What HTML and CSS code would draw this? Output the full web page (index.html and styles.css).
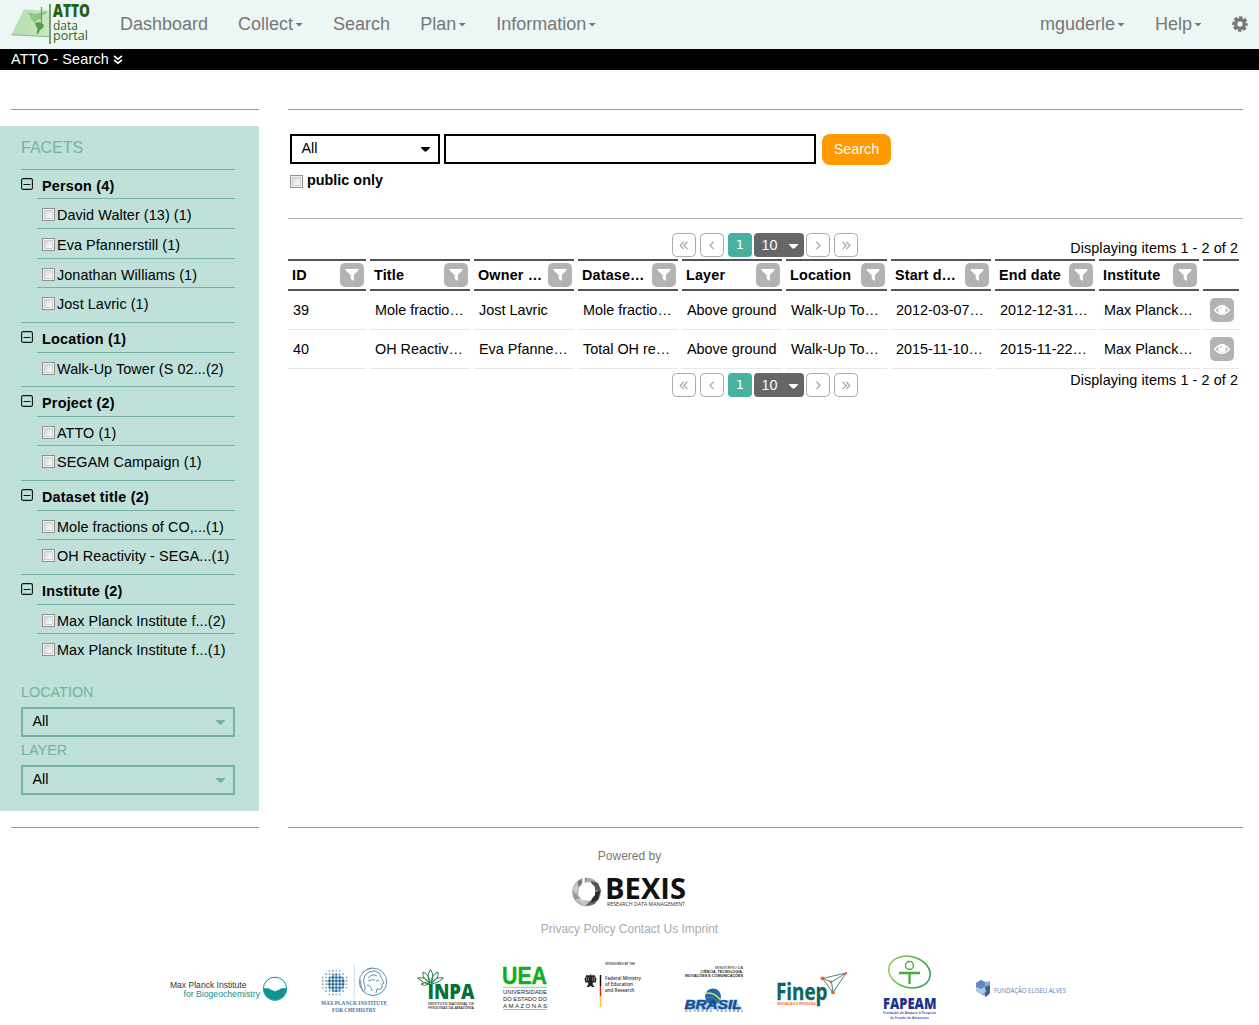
FILE: index.html
```html
<!DOCTYPE html>
<html lang="en">
<head>
<meta charset="utf-8">
<title>ATTO - Search</title>
<link rel="stylesheet" href="styles.css">
</head>
<body>
<svg class="defs" width="0" height="0">
  <symbol id="funnel" viewBox="0 0 24 24"><path fill="#fff" d="M5.600 6h12.800v1.300l-4.500 4.600v6.200l-3.200-2.200v-4L5.600 7.300z"/></symbol>
  <symbol id="eye" viewBox="0 0 24 24"><path fill="none" stroke="#fff" stroke-width="1.500" d="M4.800 12.200Q12 3.200 19.200 12.200Q12 20.200 4.800 12.200z"/><circle cx="12" cy="11.400" r="3.900" fill="#fff"/><path fill="none" stroke="#b3b3b3" stroke-width=".8" d="M10 11.200q.2-1.800 2-2"/></symbol>
  <symbol id="minus" viewBox="0 0 12 12"><rect x=".6" y=".6" width="10.800" height="10.800" rx="1.500" fill="none" stroke="#111" stroke-width="1.100"/><path d="M2.500 6.500h7" stroke="#111"/></symbol>
  <symbol id="first" viewBox="0 0 24 24"><path fill="none" stroke="#aaa" stroke-width="1.400" d="M11.800 8.500l-4 4 4 4M15.800 8.500l-4 4 4 4"/></symbol>
  <symbol id="prev" viewBox="0 0 24 24"><path fill="none" stroke="#aaa" stroke-width="1.400" d="M13.800 8.500l-4 4 4 4"/></symbol>
</svg>

<header class="navbar">
  <svg class="brand" viewBox="0 0 105 49">
    <defs><linearGradient id="land" x1="0" x2="1"><stop offset="0" stop-color="#b5dcae"/><stop offset="1" stop-color="#cbe6c3"/></linearGradient></defs>
    <path d="M11.500 34.800L24 9.500l25 1v26.500z" fill="url(#land)"/>
    <path d="M11.500 34.800l37.500 1.800" stroke="#86bb80"/>
    <path d="M26 14l4-1 5 1 6-1.500 6-1.500-1 3-4 1-1 4-4 1-2 3-4-4-1-4z" fill="#8cc77f"/>
    <path d="M35 23l5-1 4 3-1 3-3 2-2 4-1.500 0 1-5-2-4z" fill="#4fa04b"/>
    <path d="M41.500 7v16" stroke="#a7837c" stroke-width="1.300"/>
    <path d="M50 4v40" stroke="#4c8548" stroke-width="1.500"/>
    <text x="53" y="17" font-size="17.500" font-weight="800" fill="#245f16" textLength="37" lengthAdjust="spacingAndGlyphs">ATTO</text>
    <text x="53" y="29.500" font-size="12.500" fill="#2c6822" textLength="25" lengthAdjust="spacingAndGlyphs">data</text>
    <text x="53" y="40" font-size="12.500" fill="#2c6822" textLength="35" lengthAdjust="spacingAndGlyphs">portal</text>
  </svg>
  <nav class="menu">
    <a>Dashboard</a><a>Collect<i class="caret"></i></a><a>Search</a><a>Plan<i class="caret"></i></a><a>Information<i class="caret"></i></a>
  </nav>
  <nav class="menu menu-right">
    <a>mguderle<i class="caret"></i></a><a>Help<i class="caret"></i></a>
    <svg class="gear" viewBox="0 0 16 16"><path fill="none" stroke="#777" stroke-width="3.600" stroke-dasharray="3.100 1.612" stroke-dashoffset="1.550" d="M14 8A6 6 0 1 1 2 8A6 6 0 1 1 14 8"/><circle cx="8" cy="8" r="4.400" fill="none" stroke="#777" stroke-width="3.400"/></svg>
  </nav>
</header>
<div class="crumb"><span>ATTO - Search</span><svg viewBox="0 0 10 10"><path d="M1 .8l4 3.400L9 .8M1 4.800l4 3.400 4-3.400" fill="none" stroke="#fff" stroke-width="1.700"/></svg></div>

<div class="page">
  <aside class="side">
    <div class="rule"></div>
    <div class="panel">
      <h2>FACETS</h2>
      <section class="group"><h3><svg><use href="#minus"/></svg>Person (4)</h3>
        <ul><li><input type="checkbox">David Walter (13) (1)</li><li><input type="checkbox">Eva Pfannerstill (1)</li><li><input type="checkbox">Jonathan Williams (1)</li><li><input type="checkbox">Jost Lavric (1)</li></ul></section>
      <section class="group"><h3><svg><use href="#minus"/></svg>Location (1)</h3>
        <ul><li><input type="checkbox">Walk-Up Tower (S 02...(2)</li></ul></section>
      <section class="group"><h3><svg><use href="#minus"/></svg>Project (2)</h3>
        <ul><li><input type="checkbox">ATTO (1)</li><li><input type="checkbox">SEGAM Campaign (1)</li></ul></section>
      <section class="group"><h3><svg><use href="#minus"/></svg>Dataset title (2)</h3>
        <ul><li><input type="checkbox">Mole fractions of CO,...(1)</li><li><input type="checkbox">OH Reactivity - SEGA...(1)</li></ul></section>
      <section class="group"><h3><svg><use href="#minus"/></svg>Institute (2)</h3>
        <ul><li><input type="checkbox">Max Planck Institute f...(2)</li><li><input type="checkbox">Max Planck Institute f...(1)</li></ul></section>
      <h4>LOCATION</h4>
      <div class="select green"><span>All</span><i class="arrow"></i></div>
      <h4 class="second">LAYER</h4>
      <div class="select green"><span>All</span><i class="arrow"></i></div>
    </div>
    <div class="rule"></div>
  </aside>

  <main class="content">
    <div class="rule"></div>
    <form class="search">
      <div class="select"><span>All</span><i class="arrow"></i></div>
      <input class="query" type="text">
      <button type="button">Search</button>
    </form>
    <label class="public"><input type="checkbox">public only</label>
    <div class="rule light"></div>

    <div class="pagerbar">
      <div class="pager"><svg class="pg"><use href="#first"/></svg><svg class="pg"><use href="#prev"/></svg><b>1</b><span class="size">10<i class="arrow"></i></span><svg class="pg flip"><use href="#prev"/></svg><svg class="pg flip"><use href="#first"/></svg></div>
      <p>Displaying items 1 - 2 of 2</p>
    </div>
    <table>
      <colgroup><col class="c-id"><col><col><col><col><col class="c-loc"><col><col><col><col class="c-act"></colgroup>
      <thead><tr>
        <th><div>ID<svg><use href="#funnel"/></svg></div></th><th><div>Title<svg><use href="#funnel"/></svg></div></th><th><div>Owner …<svg><use href="#funnel"/></svg></div></th><th><div>Datase…<svg><use href="#funnel"/></svg></div></th><th><div>Layer<svg><use href="#funnel"/></svg></div></th><th><div>Location<svg><use href="#funnel"/></svg></div></th><th><div>Start d…<svg><use href="#funnel"/></svg></div></th><th><div>End date<svg><use href="#funnel"/></svg></div></th><th><div>Institute<svg><use href="#funnel"/></svg></div></th><th></th>
      </tr></thead>
      <tbody>
        <tr><td>39</td><td>Mole fractio…</td><td>Jost Lavric</td><td>Mole fractio…</td><td>Above ground</td><td>Walk-Up To…</td><td>2012-03-07…</td><td>2012-12-31…</td><td>Max Planck…</td><td class="act"><svg><use href="#eye"/></svg></td></tr>
        <tr><td>40</td><td>OH Reactiv…</td><td>Eva Pfanne…</td><td>Total OH re…</td><td>Above ground</td><td>Walk-Up To…</td><td>2015-11-10…</td><td>2015-11-22…</td><td>Max Planck…</td><td class="act"><svg><use href="#eye"/></svg></td></tr>
      </tbody>
    </table>
    <div class="pagerbar bottom">
      <div class="pager"><svg class="pg"><use href="#first"/></svg><svg class="pg"><use href="#prev"/></svg><b>1</b><span class="size">10<i class="arrow"></i></span><svg class="pg flip"><use href="#prev"/></svg><svg class="pg flip"><use href="#first"/></svg></div>
      <p>Displaying items 1 - 2 of 2</p>
    </div>
    <div class="rule last"></div>
  </main>
</div>

<footer>
  <p class="powered">Powered by</p>
  <svg class="bexis" viewBox="569 877 120 31">
    <circle cx="586.500" cy="892" r="14.300" fill="#aaa"/>
    <path d="M586.500 877.700l-9 3.500 1 7 6-5z" fill="#777"/><path d="M577.500 881.200l-5 8 3 8 3-9z" fill="#c9c9c9"/><path d="M572.300 890l2 9 6 5-1-6z" fill="#999"/><path d="M575 900l10 6.300 5-3.300-10-5z" fill="#c4c4c4"/><path d="M585 906.300l10-2.300 2-5-7 2z" fill="#666"/><path d="M593 893l8-3-3 10-7 3z" fill="#2d2d2d"/><path d="M591 881l7 2 3 8-8-1z" fill="#555"/>
    <path d="M583 883l7-1 5 5v8l-5 6-8-1-4-5 1-8z" fill="#fff"/><path d="M583 877l2-.5-.5 8-3 1z" fill="#fff"/>
    <text x="605" y="899.300" font-size="28" font-weight="700" fill="#111" textLength="81" lengthAdjust="spacingAndGlyphs">BEXIS</text>
    <text x="607" y="906" font-size="5.200" fill="#333" textLength="78" lengthAdjust="spacingAndGlyphs">RESEARCH DATA MANAGEMENT</text>
  </svg>
  <p class="links"><a>Privacy Policy</a> <a>Contact Us</a> <a>Imprint</a></p>
  <div class="partners">
    <svg width="136" viewBox="168 950 136 72">
      <g class="arial"><text x="170" y="987.500" font-size="9" fill="#333" textLength="76.500" lengthAdjust="spacingAndGlyphs">Max Planck Institute</text>
      <text x="183.500" y="996.500" font-size="9" fill="#138f90" textLength="76.500" lengthAdjust="spacingAndGlyphs">for Biogeochemistry</text></g>
      <circle cx="275" cy="988.800" r="11.600" fill="#fff" stroke="#109293"/>
      <path d="M263.400 988.300H268Q270 988.300 271 990Q273 989.500 275 991.500Q277 989.500 279 990Q280 988.300 282 988.300H286.600A11.600 11.600 0 0 1 263.400 988.300z" fill="#109293"/>
    </svg>
    <svg width="98" viewBox="304 950 98 72">
      <defs><pattern id="dots" x="321" y="969" width="3.400" height="3.400" patternUnits="userSpaceOnUse"><circle cx="1.700" cy="1.700" r="1.450" fill="#1f5f90"/></pattern>
      <pattern id="dots2" x="321" y="969" width="3.400" height="3.400" patternUnits="userSpaceOnUse"><circle cx="1.700" cy="1.700" r=".8" fill="#5a8db2"/></pattern></defs>
      <path d="M327 969h14v3h4v3h3.500v14h-3.500v4h-4v3h-14v-3h-3.500v-4h-3v-14h3v-3h3.500z" fill="url(#dots2)"/>
      <circle cx="336" cy="983" r="9" fill="url(#dots)"/>
      <path d="M354.300 965v34" stroke="#c9dbe8"/>
      <g fill="none" stroke="#5d8fb3"><circle cx="373" cy="981.800" r="13.700"/><path d="M363 992q3-2 2-5-3-6 0-12 5-5 10-4 5 1 6 6l3 6-2 1v4q-1 2-5 1l-1 4M362 974q4-6 10-6M360.500 980q0 8 3 12M368 978q5-5 9-2M368 981q4-2 7-1M367 985q4 0 5 6M376 981l3-1"/></g>
      <g class="serif" fill="#3b78a5" font-weight="700"><text x="321" y="1005.300" font-size="6" textLength="66" lengthAdjust="spacingAndGlyphs">MAX PLANCK INSTITUTE</text><text x="332" y="1011.700" font-size="6" textLength="44" lengthAdjust="spacingAndGlyphs">FOR CHEMISTRY</text></g>
    </svg>
    <svg width="88" viewBox="402 950 88 72">
      <g fill="#fff" stroke="#23804b"><path d="M430.500 983q-5-6 0-13.500 5 7.500 0 13.500zM430 983q-8-4-7-11 7 3 7 11zM431 983q8-4 7-11-7 3-7 11zM430 984q-6 0-12.500-6 8-2 12.500 6zM431 984q6 0 12.500-6-8-2-12.500 6zM429 984q-5 3-8 0 4-3 8 0z"/></g>
      <text x="427.500" y="999.300" font-size="20.500" font-weight="800" fill="#047139" textLength="47" lengthAdjust="spacingAndGlyphs">INPA</text>
      <g fill="#222" font-weight="600"><text x="428" y="1004.800" font-size="4" textLength="46" lengthAdjust="spacingAndGlyphs">INSTITUTO NACIONAL DE</text><text x="428" y="1009" font-size="4" textLength="46" lengthAdjust="spacingAndGlyphs">PESQUISAS DA AMAZÔNIA</text></g>
    </svg>
    <svg width="76" viewBox="490 950 76 72">
      <g class="arial"><text x="502" y="984" font-size="23.500" font-weight="700" fill="#0caf18" stroke="#0caf18" stroke-width=".4" textLength="45" lengthAdjust="spacingAndGlyphs">UEA</text>
      <path d="M503 987.300h44M503 1009.500h44" stroke="#68cb6e" stroke-width=".8"/>
      <g font-size="6" fill="#222"><text x="503" y="993.700" textLength="44" lengthAdjust="spacingAndGlyphs">UNIVERSIDADE</text><text x="503" y="1000.700" textLength="44" lengthAdjust="spacingAndGlyphs">DO ESTADO DO</text><text x="503" y="1007.900" textLength="44">AMAZONAS</text></g></g>
    </svg>
    <svg width="98" viewBox="566 950 98 72">
      <text x="605" y="965" font-size="3.800" fill="#222" font-weight="600" textLength="30" lengthAdjust="spacingAndGlyphs">SPONSORED BY THE</text>
      <path d="M590.500 974l1 1.500 3-.5 2 4-1 4-2-1-1 2 2 3h-2l-2-1-2 1h-2l2-3-1-2-2 1-1-4 2-4 3 .5z" fill="#222"/><path d="M586.500 977v4M588.300 977v4M592.800 977v4M594.600 977v4" stroke="#fff" stroke-width=".4"/>
      <path d="M600.500 975v11" stroke="#111" stroke-width="1.500"/><path d="M600.500 986v10.500" stroke="#dc1e1e" stroke-width="1.500"/><path d="M600.500 996.500v10.500" stroke="#f8cc24" stroke-width="1.500"/>
      <g font-size="5.700" font-weight="600" fill="#333"><text x="605" y="979.500" textLength="36" lengthAdjust="spacingAndGlyphs">Federal Ministry</text><text x="605" y="986" textLength="28" lengthAdjust="spacingAndGlyphs">of Education</text><text x="605" y="992.300" textLength="29.500" lengthAdjust="spacingAndGlyphs">and Research</text></g>
    </svg>
    <svg width="96" viewBox="664 950 96 72">
      <g class="arial" fill="#222" font-size="3.800"><text x="715" y="969.300" textLength="28" lengthAdjust="spacingAndGlyphs">MINISTÉRIO DA</text><g font-weight="700"><text x="700.500" y="973.400" textLength="42.500" lengthAdjust="spacingAndGlyphs">CIÊNCIA, TECNOLOGIA,</text><text x="685" y="977.300" textLength="58" lengthAdjust="spacingAndGlyphs">INOVAÇÕES E COMUNICAÇÕES</text></g></g>
      <path d="M684 1009l5-9h47l6 9z" fill="#b9d8ee"/>
      <circle cx="713" cy="996.500" r="8" fill="#2368ac"/><path d="M705.500 993.500q8-2 14.500 6" stroke="#e8d94d" stroke-width="1.500" fill="none"/><path d="M706 998q7-3 12 4" stroke="#4b9b64" fill="none"/>
      <text class="arial" x="684.500" y="1009" font-size="12.500" font-weight="700" font-style="italic" fill="#164f94" stroke="#164f94" stroke-width=".4" textLength="57" lengthAdjust="spacingAndGlyphs">BRASIL</text>
      <text class="arial" x="685" y="1012" font-size="2.900" font-weight="700" fill="#356599" textLength="58">GOVERNO FEDERAL</text>
    </svg>
    <svg width="106" viewBox="760 950 106 72">
      <text x="776" y="999.500" font-size="22.500" font-weight="700" fill="#0b6660" stroke="#0b6660" stroke-width=".3" textLength="51.500" lengthAdjust="spacingAndGlyphs">Finep</text>
      <text x="777" y="1004.500" font-size="4" font-weight="700" fill="#ee6b34" textLength="38.500" lengthAdjust="spacingAndGlyphs">INOVAÇÃO E PESQUISA</text>
      <path d="M822.500 978.500L846 973l-13 19.500zM831.500 982l14.500-9M831.500 982l-9-3.500M831.500 982l1.500 10" fill="none" stroke="#2f7772" stroke-width=".9"/>
      <g fill="#f1582b"><circle cx="822.500" cy="978.300" r="1.900"/><circle cx="846" cy="973.200" r="1.200"/><circle cx="833" cy="992.300" r="1.900"/><circle cx="831" cy="982" r="1.400"/></g>
    </svg>
    <svg width="90" viewBox="866 950 90 72">
      <defs><linearGradient id="ring" x1="0" x2="1"><stop offset="0" stop-color="#94c94b"/><stop offset="1" stop-color="#1d9b4e"/></linearGradient></defs>
      <ellipse cx="909.500" cy="972" rx="21" ry="15.500" fill="none" stroke="url(#ring)" stroke-width="1.500" transform="rotate(14 909.500 972)"/>
      <g fill="none" stroke="#52a63e"><circle cx="909.500" cy="965.500" r="4" stroke-width="1.400"/><path d="M899 973h21M909.500 972v12" stroke-width="2.300"/></g>
      <text x="883" y="1008.700" font-size="15.500" font-weight="800" fill="#203389" textLength="53.500" lengthAdjust="spacingAndGlyphs">FAPEAM</text>
      <g fill="#3d3e91" font-size="4.300" font-weight="600"><text x="883" y="1013.700" textLength="53" lengthAdjust="spacingAndGlyphs">Fundação de Amparo à Pesquisa</text><text x="890" y="1018.500" textLength="39" lengthAdjust="spacingAndGlyphs">do Estado do Amazonas</text></g>
    </svg>
    <svg width="130" viewBox="956 950 130 72">
      <path d="M976 983l5-3 4 2 5-1v11l-4 5-5-3-5-3z" fill="#89a8d0"/><path d="M981 980l4 2v5l-4 2-5-2v-4z" fill="#6488bd"/><path d="M985 987l5-2v8l-4 4-1-3z" fill="#395f9d"/><path d="M976 987l5 2v5l-5-3zM981 989l4-2 1 5-5 2z" fill="#b1c6e0"/>
      <text x="994" y="992.500" font-size="7.800" fill="#5d7eae" textLength="72" lengthAdjust="spacingAndGlyphs">FUNDAÇÃO ELISEU ALVES</text>
    </svg>
  </div>
</footer>
</body>
</html>
```
FILE: styles.css
```css
* { box-sizing: border-box; }
body { margin: 0; background: #fff; color: #000; font: 14.4px/18px "Liberation Sans", Arial, sans-serif; overflow: hidden; }
h2, h3, h4, p, ul { margin: 0; padding: 0; font-weight: normal; }
svg text { font-family: "Open Sans", "Noto Sans", sans-serif; }
svg .arial text, svg text.arial { font-family: "Liberation Sans", Arial, sans-serif; }
svg .serif text { font-family: "Liberation Serif", serif; }
.defs { display: none; }

.navbar { display: flex; height: 49px; background: #ecf6f5; color: #777; font-size: 18px; }
.brand { width: 105px; height: 49px; }
.menu { display: flex; align-items: center; gap: 30px; padding: 0 0 2px 15px; line-height: 20px; }
.menu a { display: flex; align-items: center; }
.menu-right { margin-left: auto; padding-right: 11px; }
.caret { width: 8px; height: 4px; margin: 2px 0 0 2px; background: #777; clip-path: polygon(0 0, 100% 0, 50% 100%); }
.gear { width: 16px; height: 16px; }
.crumb { display: flex; align-items: center; gap: 4px; height: 21px; padding: 0 0 2px 11px; background: #000; color: #fff; letter-spacing: .2px; }
.crumb svg { width: 10px; height: 10px; margin-top: 2px; }

.page { display: flex; gap: 29px; padding-top: 39px; height: 758px; }
.rule { height: 1px; background: #999; }
.side { width: 259px; }
.side .rule { margin-left: 11px; }
.panel { height: 685px; margin: 16px 0; padding: 12px 24px 0 21px; background: #bfe1d9; }
.panel h2 { height: 31px; line-height: 20px; font-size: 16px; color: #74b3a3; }
.group { border-top: 1px solid #74b3a3; }
.group h3 { display: flex; gap: 9px; height: 29px; padding-top: 7px; font-size: 14.4px; font-weight: bold; letter-spacing: .22px; }
.group:nth-of-type(1) h3 { height: 28px; }
.group h3 svg { width: 12px; height: 12px; margin-top: 1px; }
.group ul { list-style: none; margin-left: 16px; }
.group li { display: flex; gap: 2px; height: 30px; padding: 7px 0 0 5px; border-top: 1px solid #74b3a3; white-space: nowrap; letter-spacing: .08px; }
.group li:nth-last-child(2) { height: 29px; }
.group li:last-child { height: 35px; }
.group li:only-child { height: 34px; }
input[type="checkbox"] { appearance: none; width: 13px; height: 13px; margin: 2px 0 0; border: 1px solid #8e8f8f; background: linear-gradient(135deg, #c8ccd3, #f8f8f8 75%); box-shadow: inset 0 0 0 1px #f4f4f4, inset 0 0 0 2px #cbcccf; flex: none; }
.panel h4 { height: 24px; margin-top: 15px; line-height: 18px; font-size: 14.4px; color: #74b3a3; }
.panel h4.second { height: 24px; margin-top: 4px; }
.select { display: flex; align-items: center; justify-content: space-between; width: 150px; height: 30px; padding: 0 7px 2px 9.5px; border: 2px solid #000; }
.select.green { width: 214px; border-color: #74b3a3; }
.arrow { width: 9px; height: 5px; margin: 2px 1px 0 0; background: #000; clip-path: polygon(0 0, 100% 0, 100% 25%, 60% 100%, 40% 100%, 0 25%); }
.green .arrow { background: #74b3a3; }

.content { width: 955px; }
.search { display: flex; gap: 4px; padding: 24px 0 0 2px; }
.query { width: 372px; height: 30px; margin: 0; padding: 0 8px; border: 2px solid #000; font: inherit; }
.search button { width: 69px; height: 31px; margin-left: 2px; padding: 0 0 2px; border: 0; border-radius: 8px; background: #f90; color: #fff; font: inherit; }
.public { display: flex; gap: 4px; padding: 6px 0 0 2px; height: 53px; font-weight: bold; }
.public input[type="checkbox"] { margin-top: 4px; }
.rule.light { background: #b0b0b0; }
.pagerbar { display: flex; justify-content: space-between; height: 40px; padding: 14px 5px 0 384px; }
.pagerbar p { padding-top: 6px; letter-spacing: .08px; }
.pager { display: flex; height: 24px; }
.pg { width: 24px; height: 24px; margin-right: 4px; border: 1px solid #aaa; border-radius: 4.5px; }
.flip { transform: scaleX(-1); }
.pager b { width: 24px; margin-right: 2px; border-radius: 4px; background: #47b1a0; color: #fff; font: 13px/24px "DejaVu Sans", sans-serif; text-align: center; }
.size { display: flex; align-items: center; justify-content: space-between; width: 50px; margin-right: 2px; padding: 0 5px 0 7.5px; border-radius: 4px; background: #666; color: #fff; }
.size .arrow { background: #fff; }
.pagerbar.bottom { height: 458px; padding-top: 4px; }
.pagerbar.bottom p { padding-top: 0; margin-top: -2px; }

table { table-layout: fixed; width: 959px; margin-left: -4px; border-collapse: separate; border-spacing: 4px 0; }
col { width: 100px; }
.c-id { width: 78px; }
.c-loc { width: 101px; }
.c-act { width: 36px; }
th { height: 32px; padding: 0 2px 0 4px; border: solid #555; border-width: 2px 0; text-align: left; letter-spacing: .15px; }
th div { display: flex; align-items: center; justify-content: space-between; white-space: nowrap; }
th svg, .act svg { display: block; width: 24px; height: 24px; border-radius: 5px; background: #b3b3b3; }
td { height: 39px; padding: 0 0 1px 5px; border-bottom: 1px solid #e7e7e7; white-space: nowrap; }
.act { padding: 0 0 1px 7px; }

footer { display: flex; flex-direction: column; align-items: center; font-size: 12px; color: #777; }
.powered { margin-top: 19px; line-height: 18px; }
.bexis { width: 120px; height: 31px; margin: 12px 1px 0 0; }
.links { margin-top: 12px; line-height: 18px; color: #aaa; }
.partners { display: flex; align-self: flex-start; margin: 12px 0 0 168px; }
.partners svg { height: 72px; flex: none; }
```
